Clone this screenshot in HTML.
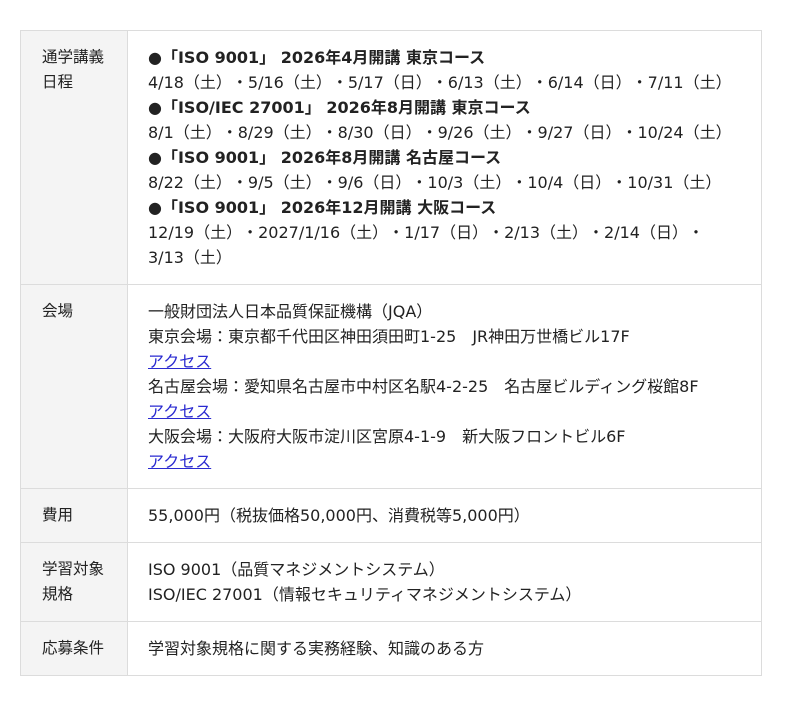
<!DOCTYPE html>
<html><head><meta charset="utf-8"><style>
html,body{margin:0;padding:0;background:#fff;}
body{width:800px;height:706px;font-family:"DejaVu Sans","Noto Sans CJK JP",sans-serif;font-size:16px;color:#222;text-spacing-trim:space-all;}
table{position:absolute;left:20px;top:30px;width:742px;border-collapse:collapse;}
td{border:1px solid #dcdcdc;line-height:25px;padding:14px 20px 14px 20px;vertical-align:top;}
td.h{width:65px;background:#f4f4f4;padding-left:21px;font-size:15.5px;}
b{font-weight:bold;}
a{color:#2a2ad0;text-decoration:underline;}
</style></head><body>
<table>
<tr><td class="h">通学講義<br>日程</td><td>
<b>●「ISO 9001」 2026年4月開講 東京コース</b><br>
4/18（土）・5/16（土）・5/17（日）・6/13（土）・6/14（日）・7/11（土）<br>
<b>●「ISO/IEC 27001」 2026年8月開講 東京コース</b><br>
8/1（土）・8/29（土）・8/30（日）・9/26（土）・9/27（日）・10/24（土）<br>
<b>●「ISO 9001」 2026年8月開講 名古屋コース</b><br>
8/22（土）・9/5（土）・9/6（日）・10/3（土）・10/4（日）・10/31（土）<br>
<b>●「ISO 9001」 2026年12月開講 大阪コース</b><br>
12/19（土）・2027/1/16（土）・1/17（日）・2/13（土）・2/14（日）・<br>
3/13（土）</td></tr>
<tr><td class="h">会場</td><td>
一般財団法人日本品質保証機構（JQA）<br>
東京会場：東京都千代田区神田須田町1-25　JR神田万世橋ビル17F<br>
<a>アクセス</a><br>
名古屋会場：愛知県名古屋市中村区名駅4-2-25　名古屋ビルディング桜館8F<br>
<a>アクセス</a><br>
大阪会場：大阪府大阪市淀川区宮原4-1-9　新大阪フロントビル6F<br>
<a>アクセス</a></td></tr>
<tr><td class="h">費用</td><td>55,000円（税抜価格50,000円、消費税等5,000円）</td></tr>
<tr><td class="h">学習対象<br>規格</td><td>ISO 9001（品質マネジメントシステム）<br>ISO/IEC 27001（情報セキュリティマネジメントシステム）</td></tr>
<tr><td class="h">応募条件</td><td>学習対象規格に関する実務経験、知識のある方</td></tr>
</table>
</body></html>
